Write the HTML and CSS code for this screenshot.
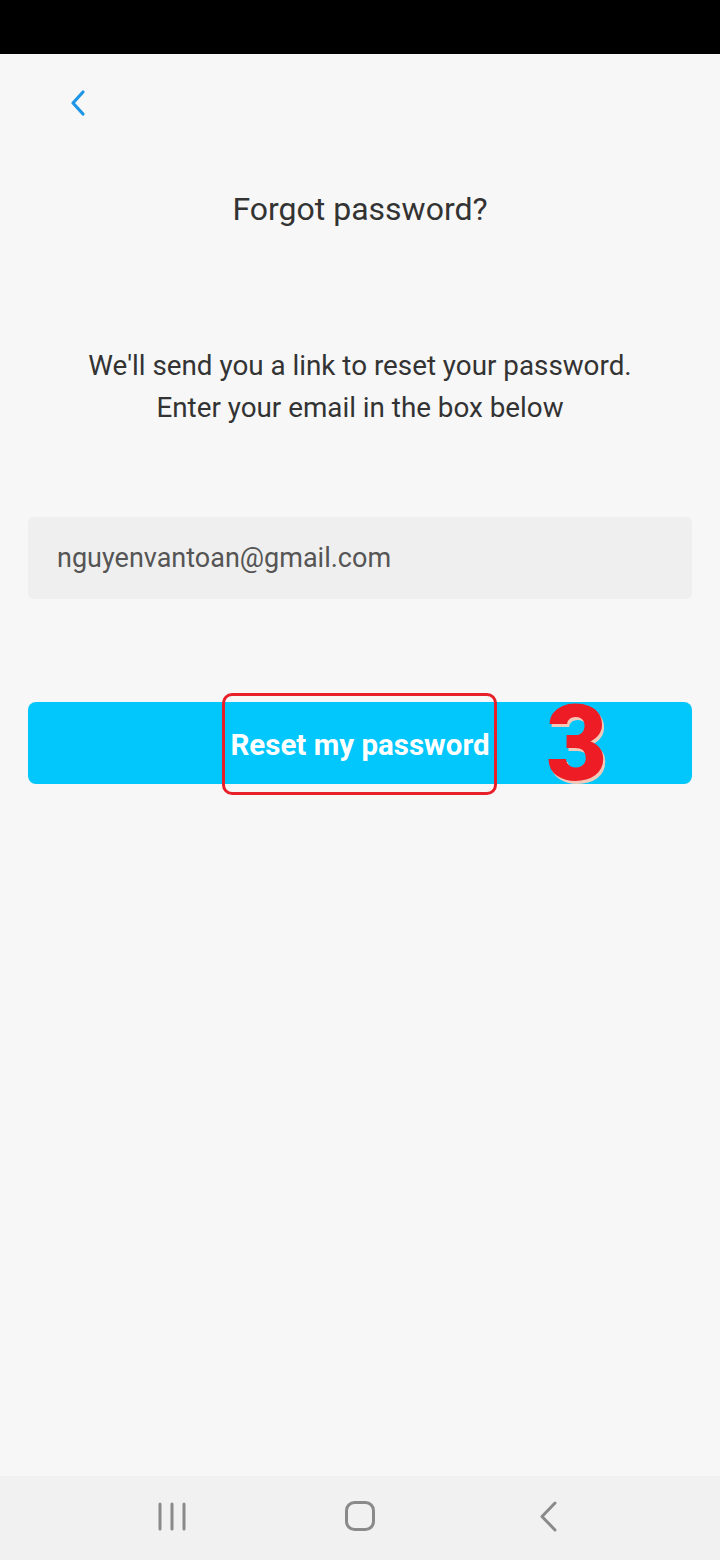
FILE: index.html
```html
<!DOCTYPE html>
<html lang="en">
<head>
    <meta charset="UTF-8">
    <meta name="viewport" content="width=device-width, initial-scale=1.0">
    <title>Forgot password</title>
    <link rel="stylesheet" href="styles.css">
</head>
<body>

<div class="status-bar"></div>

<main class="screen">
    <div class="back-row">
        <button class="back-btn" aria-label="Back">
            <svg width="24" height="30" viewBox="0 0 24 30">
                <path d="M17 4 L7 15 L17 26" fill="none" stroke="#1e96e6" stroke-width="3.2" stroke-linecap="round" stroke-linejoin="round"/>
            </svg>
        </button>
    </div>

    <h1 class="title">Forgot password?</h1>

    <p class="subtitle">We'll send you a link to reset your password.<br>Enter your email in the box below</p>

    <div class="email-box">nguyenvantoan@gmail.com</div>

    <div class="button-wrap">
        <button class="reset-btn">Reset my password</button>
        <!-- tutorial markup drawn on top of the screenshot -->
        <div class="mark-box"></div>
        <div class="mark-num">3</div>
    </div>
</main>

<nav class="nav-bar">
    <svg width="40" height="40" viewBox="0 0 40 40">
        <g stroke="#8a8a8a" stroke-width="3" stroke-linecap="round">
            <line x1="8" y1="8" x2="8" y2="33"/>
            <line x1="20" y1="8" x2="20" y2="33"/>
            <line x1="32" y1="8" x2="32" y2="33"/>
        </g>
    </svg>
    <svg width="40" height="40" viewBox="0 0 40 40">
        <rect x="6.5" y="6.5" width="27" height="27" rx="8" fill="none" stroke="#8a8a8a" stroke-width="3"/>
    </svg>
    <svg width="40" height="40" viewBox="0 0 40 40">
        <path d="M27 7 L14 20.5 L27 34" fill="none" stroke="#8a8a8a" stroke-width="3" stroke-linecap="round" stroke-linejoin="round"/>
    </svg>
</nav>

</body>
</html>
```

FILE: styles.css
```css
body {
    font-family: Roboto, "Noto Sans", Arial, sans-serif;
    background-color: #f7f7f7;
    margin: 0;
    padding: 0;
    height: 1560px;
    display: flex;
    flex-direction: column;
}
.status-bar {
    height: 54px;
    background-color: #000;
}
.screen {
    flex: 1;
    padding: 0 28px;
}
.back-row {
    height: 98px;
}
.back-btn {
    margin: 34px 0 0 38px;
    padding: 0;
    border: none;
    background: none;
    width: 24px;
    height: 30px;
}
.title {
    margin: 37px 0 0;
    text-align: center;
    font-size: 32px;
    font-weight: 400;
    line-height: 40px;
    color: #333;
}
.subtitle {
    margin: 116px 0 0;
    text-align: center;
    font-size: 27.8px;
    line-height: 42px;
    color: #333;
}
.email-box {
    margin-top: 88px;
    height: 82px;
    box-sizing: border-box;
    padding-left: 29px;
    display: flex;
    align-items: center;
    background-color: #efefef;
    border-radius: 6px;
    font-size: 27px;
    color: #555;
}
.button-wrap {
    margin-top: 103px;
    position: relative;
}
.reset-btn {
    display: block;
    width: 100%;
    height: 82px;
    padding: 4px 0 0;
    border: none;
    border-radius: 8px;
    background-color: #02c7fc;
    color: #fff;
    font-family: Roboto, Arial, sans-serif;
    font-size: 29.5px;
    font-weight: 700;
}
.mark-box {
    position: absolute;
    left: 194px;
    top: -9px;
    width: 275px;
    height: 102px;
    box-sizing: border-box;
    border: 3px solid #e8202a;
    border-radius: 10px;
}
.mark-num {
    position: absolute;
    left: 518px;
    top: -13px;
    font-family: Roboto, sans-serif;
    font-weight: 900;
    font-size: 106px;
    line-height: 110px;
    color: #ee1d25;
    text-shadow: 2px 3px 0 #f2c9b8;
}
.nav-bar {
    height: 84px;
    box-sizing: border-box;
    padding-bottom: 4px;
    background-color: #f1f1f1;
    display: flex;
    justify-content: center;
    align-items: center;
    gap: 148px;
}
```
